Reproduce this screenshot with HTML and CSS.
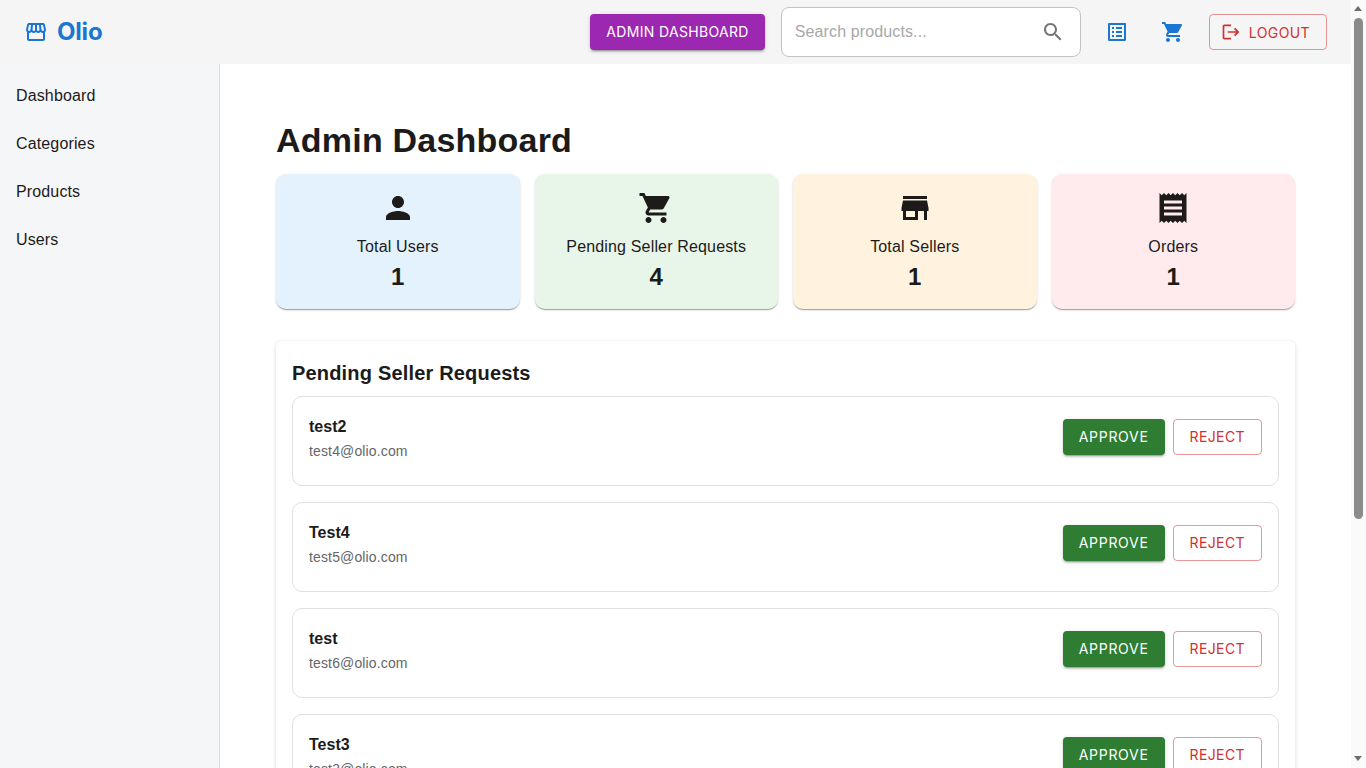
FILE: index.html
```html
<!DOCTYPE html>
<html lang="en">

<head>
    <meta charset="UTF-8">
    <meta name="viewport" content="width=device-width, initial-scale=1.0">
    <title>Olio - Admin Dashboard</title>
    <link rel="stylesheet" href="styles.css">
</head>

<body>
    <header class="topbar">
        <a class="logo" href="#">
            <svg class="icon" viewBox="0 0 24 24"><path d="M21.9 8.89l-1.05-4.37c-.22-.9-1-1.52-1.91-1.52H5.05c-.9 0-1.69.63-1.9 1.52L2.1 8.89c-.24 1.02-.02 2.06.62 2.88.08.11.19.19.28.29V19c0 1.1.9 2 2 2h14c1.1 0 2-.9 2-2v-6.94c.09-.09.2-.18.28-.28.64-.82.87-1.87.62-2.89m-2.99-3.9 1.05 4.37c.1.42.01.84-.25 1.17-.14.18-.44.47-.94.47-.61 0-1.14-.49-1.21-1.14L16.98 5zM13 5h1.96l.54 4.52c.05.39-.07.78-.33 1.07-.22.26-.54.41-.95.41-.67 0-1.22-.59-1.22-1.31zM8.49 9.52 9.04 5H11v4.69c0 .72-.55 1.31-1.29 1.31-.34 0-.65-.15-.89-.41-.25-.29-.37-.68-.33-1.07m-4.45-.16L5.05 5h1.97l-.58 4.86c-.08.65-.6 1.14-1.21 1.14-.49 0-.8-.29-.93-.47-.27-.32-.36-.75-.26-1.17M5 19v-6.03c.08.01.15.03.23.03.87 0 1.66-.36 2.24-.95.6.6 1.4.95 2.31.95.87 0 1.65-.36 2.23-.93.59.57 1.39.93 2.29.93.84 0 1.64-.35 2.24-.95.58.59 1.37.95 2.24.95.08 0 .15-.02.23-.03V19z"/></svg>
            <span>Olio</span>
        </a>
        <div class="topbar-actions">
            <button class="btn btn-purple" type="button">Admin Dashboard</button>
            <div class="search">
                <input type="text" placeholder="Search products...">
                <svg class="icon" viewBox="0 0 24 24"><path d="M15.5 14h-.79l-.28-.27C15.41 12.59 16 11.11 16 9.5 16 5.91 13.09 3 9.5 3S3 5.91 3 9.5 5.91 16 9.5 16c1.61 0 3.09-.59 4.23-1.57l.27.28v.79l5 4.99L20.49 19zm-6 0C7.01 14 5 11.99 5 9.5S7.01 5 9.5 5 14 7.01 14 9.5 11.99 14 9.5 14"/></svg>
            </div>
            <a class="icon-link" href="#"><svg class="icon" viewBox="0 0 24 24"><path d="M19 5v14H5V5zm1.1-2H3.9c-.5 0-.9.4-.9.9v16.2c0 .4.4.9.9.9h16.2c.4 0 .9-.5.9-.9V3.9c0-.5-.5-.9-.9-.9M11 7h6v2h-6zm0 4h6v2h-6zm0 4h6v2h-6zM7 7h2v2H7zm0 4h2v2H7zm0 4h2v2H7z"/></svg></a>
            <a class="icon-link" href="#"><svg class="icon" viewBox="0 0 24 24"><path d="M7 18c-1.1 0-1.99.9-1.99 2S5.9 22 7 22s2-.9 2-2-.9-2-2-2M1 2v2h2l3.6 7.59-1.35 2.45c-.16.28-.25.61-.25.96 0 1.1.9 2 2 2h12v-2H7.42c-.14 0-.25-.11-.25-.25l.03-.12.9-1.63h7.45c.75 0 1.41-.41 1.75-1.03l3.58-6.49c.08-.14.12-.31.12-.48 0-.55-.45-1-1-1H5.21l-.94-2zm16 16c-1.1 0-1.99.9-1.99 2s.89 2 1.99 2 2-.9 2-2-.9-2-2-2"/></svg></a>
            <button class="btn btn-outline btn-logout" type="button">
                <svg class="icon" viewBox="0 0 24 24"><path d="M17 7l-1.41 1.41L18.17 11H8v2h10.17l-2.58 2.58L17 17l5-5zM4 5h8V3H4c-1.1 0-2 .9-2 2v14c0 1.1.9 2 2 2h8v-2H4z"/></svg>
                Logout
            </button>
        </div>
    </header>

    <div class="layout">
        <nav class="sidebar">
            <a href="#">Dashboard</a>
            <a href="#">Categories</a>
            <a href="#">Products</a>
            <a href="#">Users</a>
        </nav>

        <main class="content">
            <h1>Admin Dashboard</h1>

            <section class="stats">
                <div class="stat stat-blue">
                    <svg class="icon" viewBox="0 0 24 24"><path d="M12 12c2.21 0 4-1.79 4-4s-1.79-4-4-4-4 1.79-4 4 1.79 4 4 4m0 2c-2.67 0-8 1.34-8 4v2h16v-2c0-2.66-5.33-4-8-4"/></svg>
                    <p class="stat-label">Total Users</p>
                    <p class="stat-value">1</p>
                </div>
                <div class="stat stat-green">
                    <svg class="icon" viewBox="0 0 24 24"><path d="M7 18c-1.1 0-1.99.9-1.99 2S5.9 22 7 22s2-.9 2-2-.9-2-2-2M1 2v2h2l3.6 7.59-1.35 2.45c-.16.28-.25.61-.25.96 0 1.1.9 2 2 2h12v-2H7.42c-.14 0-.25-.11-.25-.25l.03-.12.9-1.63h7.45c.75 0 1.41-.41 1.75-1.03l3.58-6.49c.08-.14.12-.31.12-.48 0-.55-.45-1-1-1H5.21l-.94-2zm16 16c-1.1 0-1.99.9-1.99 2s.89 2 1.99 2 2-.9 2-2-.9-2-2-2"/></svg>
                    <p class="stat-label">Pending Seller Requests</p>
                    <p class="stat-value">4</p>
                </div>
                <div class="stat stat-orange">
                    <svg class="icon" viewBox="0 0 24 24"><path d="M20 4H4v2h16zm1 10v-2l-1-5H4l-1 5v2h1v6h10v-6h4v6h2v-6zm-9 4H6v-4h6z"/></svg>
                    <p class="stat-label">Total Sellers</p>
                    <p class="stat-value">1</p>
                </div>
                <div class="stat stat-pink">
                    <svg class="icon" viewBox="0 0 24 24"><path d="M18 17H6v-2h12zm0-4H6v-2h12zm0-4H6V7h12zM3 22l1.5-1.5L6 22l1.5-1.5L9 22l1.5-1.5L12 22l1.5-1.5L15 22l1.5-1.5L18 22l1.5-1.5L21 22V2l-1.5 1.5L18 2l-1.5 1.5L15 2l-1.5 1.5L12 2l-1.5 1.5L9 2 7.5 3.5 6 2 4.5 3.5 3 2z"/></svg>
                    <p class="stat-label">Orders</p>
                    <p class="stat-value">1</p>
                </div>
            </section>

            <section class="panel">
                <h2>Pending Seller Requests</h2>

                <div class="request">
                    <div>
                        <p class="request-name">test2</p>
                        <p class="request-email">test4@olio.com</p>
                    </div>
                    <div class="request-actions">
                        <button class="btn btn-green" type="button">Approve</button>
                        <button class="btn btn-outline" type="button">Reject</button>
                    </div>
                </div>

                <div class="request">
                    <div>
                        <p class="request-name">Test4</p>
                        <p class="request-email">test5@olio.com</p>
                    </div>
                    <div class="request-actions">
                        <button class="btn btn-green" type="button">Approve</button>
                        <button class="btn btn-outline" type="button">Reject</button>
                    </div>
                </div>

                <div class="request">
                    <div>
                        <p class="request-name">test</p>
                        <p class="request-email">test6@olio.com</p>
                    </div>
                    <div class="request-actions">
                        <button class="btn btn-green" type="button">Approve</button>
                        <button class="btn btn-outline" type="button">Reject</button>
                    </div>
                </div>

                <div class="request">
                    <div>
                        <p class="request-name">Test3</p>
                        <p class="request-email">test3@olio.com</p>
                    </div>
                    <div class="request-actions">
                        <button class="btn btn-green" type="button">Approve</button>
                        <button class="btn btn-outline" type="button">Reject</button>
                    </div>
                </div>
            </section>
        </main>
    </div>

    <div class="scrollbar">
        <div class="scrollbar-arrow scrollbar-up"></div>
        <div class="scrollbar-thumb"></div>
        <div class="scrollbar-arrow scrollbar-down"></div>
    </div>
</body>

</html>
```

FILE: styles.css
```css
* {
    margin: 0;
    padding: 0;
    box-sizing: border-box;
}

body {
    font-family: "Liberation Sans", Arial, sans-serif;
    color: #1c1b1a;
    background-color: #FFFFFF;
    margin-right: 15px;
}

a {
    color: inherit;
    text-decoration: none;
}

.icon {
    display: block;
    width: 24px;
    height: 24px;
    fill: currentColor;
    flex-shrink: 0;
}

/* Top bar */
.topbar {
    height: 64px;
    display: flex;
    align-items: center;
    justify-content: space-between;
    padding: 0 24px;
    background-color: #F5F5F5;
}

.logo {
    display: flex;
    align-items: center;
    gap: 9px;
    color: #1976D2;
    font-family: Inter, sans-serif;
    font-size: 24px;
    line-height: 24px;
    font-weight: 700;
    letter-spacing: -0.2px;
}

.topbar-actions {
    display: flex;
    align-items: center;
}

.btn {
    height: 36px;
    padding: 0 16px 1px;
    border: none;
    border-radius: 4px;
    font-family: Inter, sans-serif;
    font-size: 14px;
    font-weight: 400;
    letter-spacing: 0.4px;
    text-transform: uppercase;
    cursor: pointer;
}

.btn-purple {
    background-color: #9C27B0;
    color: #FFFFFF;
    letter-spacing: 0.33px;
    box-shadow: 0 3px 1px -2px rgba(0, 0, 0, 0.2), 0 2px 2px 0 rgba(0, 0, 0, 0.14), 0 1px 5px 0 rgba(0, 0, 0, 0.12);
}

.btn-green {
    background-color: #2E7D32;
    color: #FFFFFF;
    letter-spacing: 0.7px;
    box-shadow: 0 3px 1px -2px rgba(0, 0, 0, 0.2), 0 2px 2px 0 rgba(0, 0, 0, 0.14), 0 1px 5px 0 rgba(0, 0, 0, 0.12);
}

.btn-outline {
    background-color: transparent;
    color: #D32F2F;
    border: 1px solid rgba(211, 47, 47, 0.5);
}

.btn-logout {
    display: flex;
    align-items: center;
    gap: 8px;
    padding: 0 16px 0 11px;
    margin-left: 24px;
}

.btn-logout .icon {
    width: 20px;
    height: 20px;
}

.search {
    width: 300px;
    height: 50px;
    margin-left: 16px;
    display: flex;
    align-items: center;
    padding: 0 15px 0 13px;
    background-color: #FFFFFF;
    border: 1px solid #C4C4C4;
    border-radius: 8px;
    color: #757575;
}

.search input {
    flex: 1;
    min-width: 0;
    border: none;
    outline: none;
    background: transparent;
    font-family: "Liberation Sans", Arial, sans-serif;
    font-size: 16px;
    letter-spacing: 0.12px;
}

.search input::placeholder {
    color: #A8A8A8;
    opacity: 1;
}

.icon-link {
    display: block;
    color: #1976D2;
    margin-left: 24px;
}

.icon-link + .icon-link {
    margin-left: 32px;
}

/* Sidebar and content */
.layout {
    display: flex;
}

.sidebar {
    width: 220px;
    flex-shrink: 0;
    padding-top: 8px;
    background-color: #F5F6F8;
    border-right: 1px solid #DDDDDD;
}

.sidebar a {
    display: block;
    height: 48px;
    line-height: 48px;
    padding-left: 16px;
    font-size: 16px;
    letter-spacing: 0.14px;
}

.content {
    flex: 1;
    min-width: 0;
    padding: 56px 56px 320px;
}

.content h1 {
    font-size: 34px;
    line-height: 40px;
    font-weight: 700;
    letter-spacing: 0.22px;
    margin-bottom: 14px;
}

.stats {
    display: grid;
    grid-template-columns: repeat(4, 1fr);
    gap: 15px;
    margin-bottom: 32px;
}

.stat {
    height: 135px;
    padding-top: 16px;
    display: flex;
    flex-direction: column;
    align-items: center;
    border-radius: 10px;
    box-shadow: 0 2px 1px -1px rgba(0, 0, 0, 0.2), 0 1px 1px 0 rgba(0, 0, 0, 0.14), 0 1px 3px 0 rgba(0, 0, 0, 0.12);
}

.stat .icon {
    width: 36px;
    height: 36px;
}

.stat-blue {
    background-color: #E3F2FD;
}

.stat-green {
    background-color: #E8F5E9;
}

.stat-orange {
    background-color: #FFF3E0;
}

.stat-pink {
    background-color: #FFEBEE;
}

.stat-label {
    margin-top: 9px;
    font-size: 16px;
    line-height: 24px;
    letter-spacing: 0.16px;
}

.stat-value {
    margin-top: 2px;
    font-size: 24px;
    line-height: 32px;
    font-weight: 700;
}

.panel {
    padding: 16px;
    border-radius: 6px;
    box-shadow: 0 1px 4px rgba(0, 0, 0, 0.16);
}

.panel h2 {
    font-size: 20px;
    line-height: 32px;
    font-weight: 700;
    letter-spacing: 0.18px;
    margin-bottom: 7px;
}

.request {
    height: 90px;
    display: flex;
    justify-content: space-between;
    padding: 18px 16px 16px;
    margin-bottom: 16px;
    border: 1px solid #E0E0E0;
    border-radius: 10px;
}

.request-name {
    font-size: 16px;
    line-height: 24px;
    font-weight: 700;
    margin-bottom: 1px;
}

.request-email {
    font-size: 14px;
    line-height: 22px;
    letter-spacing: 0.14px;
    color: #666666;
}

.request-actions {
    display: flex;
    align-items: flex-start;
    gap: 8px;
    padding-top: 4px;
}

/* Window scrollbar, the screenshot shows it over the page edge */
.scrollbar {
    position: fixed;
    top: 0;
    right: 0;
    bottom: 0;
    width: 15px;
    background-color: #FAFAFA;
}

.scrollbar-thumb {
    position: absolute;
    top: 18px;
    left: 3px;
    width: 9px;
    height: 501px;
    border-radius: 5px;
    background-color: #8B8B8B;
}

.scrollbar-arrow {
    position: absolute;
    left: 3px;
    width: 0;
    height: 0;
    border-left: 4.5px solid transparent;
    border-right: 4.5px solid transparent;
}

.scrollbar-up {
    top: 6px;
    border-bottom: 5px solid #6E6E6E;
}

.scrollbar-down {
    bottom: 7px;
    border-top: 5px solid #6E6E6E;
}
```
